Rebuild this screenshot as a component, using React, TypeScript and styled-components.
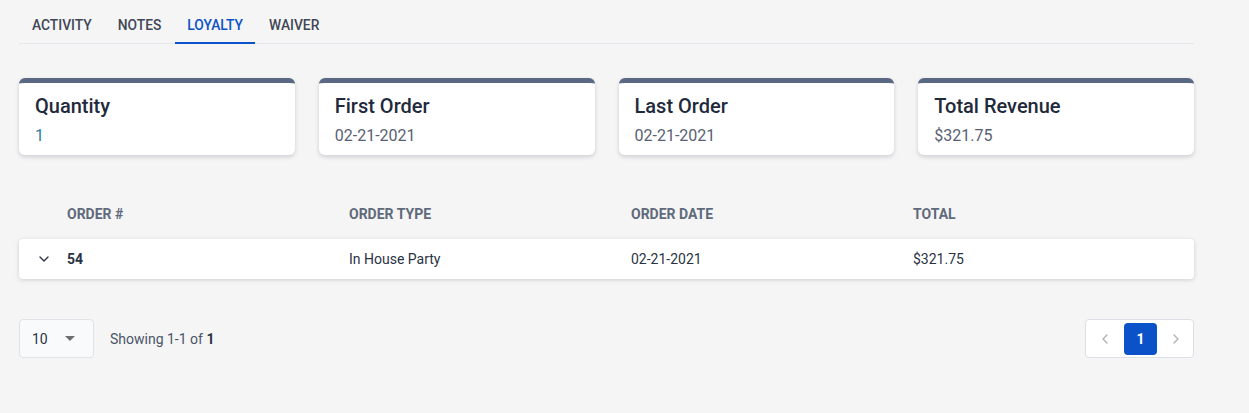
import * as React from 'react';
import styled, { createGlobalStyle } from 'styled-components';
import { ChevronDown, ChevronLeft, ChevronRight } from 'lucide-react';

const GlobalStyle = createGlobalStyle`
  body {
    margin: 0;
    background: #f5f5f5;
    font-family: Roboto, 'Liberation Sans', sans-serif;
  }
`;

const Page = styled.div`
  width: 1175px;
  padding: 7px 0 40px 19px;
`;

const TabBar = styled.div`
  display: flex;
  padding-left: 1px;
  border-bottom: 1.5px solid #e6e7ec;
`;

const Tab = styled.div<{ $active?: boolean }>`
  height: 35px;
  padding: 0 12px;
  margin-right: 2px;
  display: flex;
  align-items: center;
  font-size: 13.8px;
  font-weight: 500;
  color: ${(p) => (p.$active ? '#0b52c8' : '#3f4656')};
  border-bottom: 2px solid ${(p) => (p.$active ? '#0b52c8' : 'transparent')};
  margin-bottom: -1px;
`;

const CardRow = styled.div`
  display: grid;
  grid-template-columns: repeat(4, 1fr);
  gap: 24px;
  margin-top: 34px;
`;

const Card = styled.div`
  background: #fff;
  border-top: 5px solid #5b6884;
  border-radius: 6px;
  box-shadow: 0 2px 4px rgba(30, 40, 60, 0.18);
  height: 77px;
  padding: 11px 16px 0;
  box-sizing: border-box;
`;

const CardTitle = styled.div`
  font-size: 20px;
  font-weight: 500;
  color: #1f2a3c;
  line-height: 24px;
`;

const CardValue = styled.div<{ $accent?: boolean }>`
  margin-top: 8px;
  font-size: 16px;
  line-height: 20px;
  color: ${(p) => (p.$accent ? '#2e7aa0' : '#586172')};
`;

const Table = styled.div`
  margin-top: 40px;
`;

const HeaderRow = styled.div`
  display: grid;
  grid-template-columns: 48px 282px 282px 282px 1fr;
  height: 38px;
  align-items: center;
`;

const HeadCell = styled.div`
  font-size: 14px;
  font-weight: 700;
  color: #5f6a7c;
  text-transform: uppercase;
`;

const BodyRow = styled.div`
  display: grid;
  grid-template-columns: 48px 282px 282px 282px 1fr;
  height: 40px;
  margin-top: 6px;
  align-items: center;
  background: #fff;
  border-radius: 4px;
  box-shadow: 0 1px 4px rgba(30, 40, 60, 0.18);
`;

const Cell = styled.div<{ $bold?: boolean }>`
  font-size: 14px;
  color: #2a3344;
  font-weight: ${(p) => (p.$bold ? 700 : 400)};
`;

const ExpandCell = styled.div`
  display: flex;
  justify-content: center;
  padding-left: 2px;
  color: #2a3344;
`;

const Footer = styled.div`
  display: flex;
  align-items: center;
  margin-top: 40px;
`;

const PageSize = styled.div`
  width: 75px;
  height: 39px;
  box-sizing: border-box;
  border: 1px solid #e0e2e7;
  border-radius: 4px;
  background: #f9fafc;
  display: flex;
  align-items: center;
  justify-content: space-between;
  padding: 0 18px 0 12px;
  font-size: 14px;
  color: #2a3344;
`;

const Caret = styled.span`
  width: 0;
  height: 0;
  border-left: 5px solid transparent;
  border-right: 5px solid transparent;
  border-top: 5px solid #6e6e6e;
`;

const Showing = styled.div`
  margin-left: 16px;
  font-size: 14px;
  color: #4a5468;
  b {
    color: #2a3344;
  }
`;

const Pager = styled.div`
  margin-left: auto;
  width: 109px;
  height: 39px;
  box-sizing: border-box;
  border: 1px solid #dcdfe6;
  border-radius: 4px;
  background: #fff;
  display: flex;
  align-items: center;
  justify-content: space-between;
  padding: 0 9px 0 11px;
  color: #b2b2b2;
`;

const PageButton = styled.div`
  width: 33px;
  height: 32px;
  border-radius: 4px;
  background: #0b52c8;
  color: #fff;
  font-size: 14px;
  font-weight: 700;
  display: flex;
  align-items: center;
  justify-content: center;
`;

const stats = [
  { title: 'Quantity', value: '1', accent: true },
  { title: 'First Order', value: '02-21-2021' },
  { title: 'Last Order', value: '02-21-2021' },
  { title: 'Total Revenue', value: '$321.75' },
];

const App = () => {
  return (
    <Page>
      <GlobalStyle />
      <TabBar>
        <Tab>ACTIVITY</Tab>
        <Tab>NOTES</Tab>
        <Tab $active>LOYALTY</Tab>
        <Tab>WAIVER</Tab>
      </TabBar>
      <CardRow>
        {stats.map((s) => (
          <Card key={s.title}>
            <CardTitle>{s.title}</CardTitle>
            <CardValue $accent={s.accent}>{s.value}</CardValue>
          </Card>
        ))}
      </CardRow>
      <Table>
        <HeaderRow>
          <span />
          <HeadCell>Order #</HeadCell>
          <HeadCell>Order Type</HeadCell>
          <HeadCell>Order Date</HeadCell>
          <HeadCell>Total</HeadCell>
        </HeaderRow>
        <BodyRow>
          <ExpandCell>
            <ChevronDown size={16} strokeWidth={2} />
          </ExpandCell>
          <Cell $bold>54</Cell>
          <Cell>In House Party</Cell>
          <Cell>02-21-2021</Cell>
          <Cell>$321.75</Cell>
        </BodyRow>
      </Table>
      <Footer>
        <PageSize>
          10
          <Caret />
        </PageSize>
        <Showing>
          Showing 1-1 of <b>1</b>
        </Showing>
        <Pager>
          <ChevronLeft size={16} strokeWidth={2} />
          <PageButton>1</PageButton>
          <ChevronRight size={16} strokeWidth={2} />
        </Pager>
      </Footer>
    </Page>
  );
};

export default App;
